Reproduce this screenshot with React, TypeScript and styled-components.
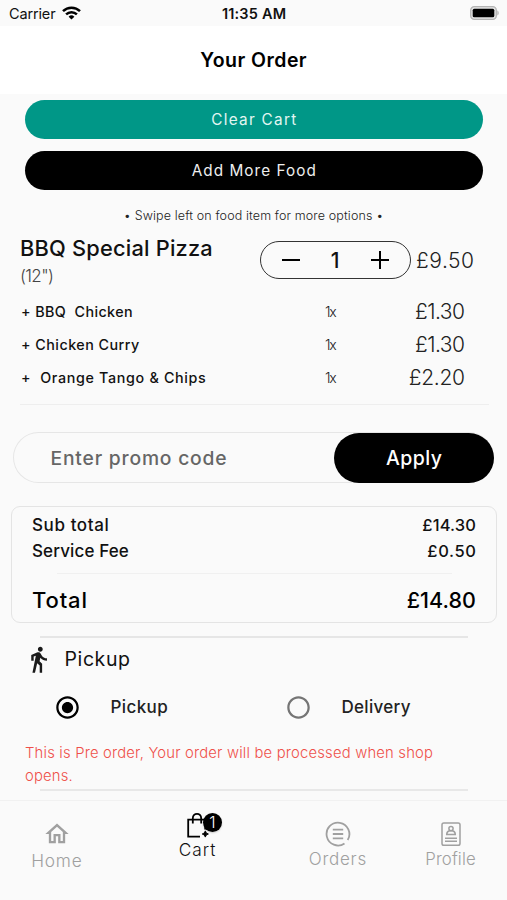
import React from 'react';
import styled, { createGlobalStyle } from 'styled-components';
import { MdDirectionsWalk, MdOutlineHome, MdRadioButtonChecked, MdRadioButtonUnchecked } from 'react-icons/md';

const GlobalStyle = createGlobalStyle`
  * { box-sizing: border-box; }
  body { margin: 0; background: #fafafa; font-family: Inter, 'Open Sans', sans-serif; color: #111; }
  button { font-family: inherit; border: 0; padding: 0; cursor: pointer; }
`;

const Screen = styled.div`
  width: 507px;
  height: 900px;
  display: flex;
  flex-direction: column;
  background: #fafafa;
  overflow: hidden;
`;

const Label = styled.span<{ $size: number; $weight?: number; $track?: number; $color?: string }>`
  font-size: ${(p) => p.$size}px;
  font-weight: ${(p) => p.$weight ?? 500};
  letter-spacing: ${(p) => p.$track ?? 0}px;
  color: ${(p) => p.$color ?? '#111'};
  margin-right: ${(p) => -(p.$track ?? 0)}px;
  white-space: pre;
`;

const StatusBar = styled.div`
  height: 26px;
  display: grid;
  grid-template-columns: 1fr auto 1fr;
  align-items: center;
  padding: 2px 8px 0 9px;
  line-height: 24px;
`;

const Carrier = styled.div`
  display: flex;
  align-items: center;
  gap: 6px;
`;

const WifiSlot = styled.div`
  display: flex;
  padding-bottom: 2px;
`;

const BatterySlot = styled.div`
  display: flex;
  justify-content: flex-end;
  padding-bottom: 2px;
`;

const Header = styled.header`
  height: 68px;
  display: flex;
  align-items: center;
  justify-content: center;
  background: #fff;
`;

const Actions = styled.div`
  display: flex;
  flex-direction: column;
  gap: 12px;
  padding: 6px 24.5px 0 25px;
`;

const PillButton = styled.button<{ $bg: string }>`
  height: 39px;
  border-radius: 20px;
  background: ${(p) => p.$bg};
  display: flex;
  align-items: center;
  justify-content: center;
`;

const Hint = styled.p`
  margin: 14px 0 0;
  line-height: 21px;
  text-align: center;
`;

const Item = styled.section`
  display: flex;
  height: 69px;
  padding: 8px 33px 0 20px;
`;

const ItemName = styled.div`
  flex: 1;
  display: flex;
  flex-direction: column;
  line-height: 28px;
`;

const Stepper = styled.div`
  width: 151px;
  height: 38px;
  margin-top: 7px;
  border: 1px solid #333;
  border-radius: 19px;
  display: flex;
  align-items: center;
  justify-content: space-between;
  padding: 0 20px;
`;

const StepButton = styled.button`
  width: 20px;
  height: 20px;
  background: transparent;
  display: flex;
`;

const ItemPrice = styled.div`
  width: 63.5px;
  line-height: 38px;
  margin-top: 7.5px;
  text-align: right;
`;

const AddonRow = styled.div`
  display: grid;
  grid-template-columns: 304px 1fr auto;
  height: 33px;
  align-items: center;
  padding: 0 42px 0 21px;
`;

const Rule = styled.hr<{ $top: number; $left: number; $right: number; $h?: number; $tone?: string }>`
  border: 0;
  flex: none;
  height: ${(p) => p.$h ?? 1}px;
  margin: ${(p) => `${p.$top}px ${p.$right}px 0 ${p.$left}px`};
  background: ${(p) => p.$tone ?? '#eeeeee'};
`;

const Promo = styled.div`
  display: flex;
  height: 51px;
  margin: 27px 13px 0;
  border-radius: 26px;
  box-shadow: inset 0 0 0 1px #e6e6e6;
`;

const PromoField = styled.div`
  flex: 1;
  display: flex;
  align-items: center;
  padding: 1px 0 0 37.5px;
`;

const ApplyButton = styled.button`
  width: 160px;
  height: 50px;
  margin-top: 1px;
  border-radius: 25px;
  background: #000;
`;

const Totals = styled.section`
  height: 117px;
  margin: 23px 10px 0 11px;
  padding: 5px 20px 0;
  border: 1px solid #e4e4e4;
  border-radius: 9px;
`;

const TotalRow = styled.div<{ $h: number; $top?: number }>`
  display: flex;
  justify-content: space-between;
  height: ${(p) => p.$h}px;
  line-height: ${(p) => p.$h}px;
  margin-top: ${(p) => p.$top ?? 0}px;
`;

const ModeHeading = styled.div`
  height: 42px;
  display: flex;
  align-items: center;
  gap: 12px;
  padding-left: 23.5px;
`;

const Modes = styled.div`
  height: 54px;
  display: grid;
  grid-template-columns: 231px 1fr;
  padding-left: 53.5px;
`;

const Mode = styled.label`
  display: flex;
  align-items: center;
  gap: 30px;
`;

const Notice = styled.p`
  margin: 7px 25px 0;
  height: 44px;
  line-height: 22px;
`;

const Nav = styled.nav`
  margin-top: 9px;
  flex: 1;
  border-top: 1px solid #f1f1f1;
  display: grid;
  grid-template-columns: 113px 168px 113px 113px;
`;

const Tab = styled.a<{ $top: number; $gap?: number }>`
  display: flex;
  flex-direction: column;
  align-items: center;
  gap: ${(p) => p.$gap ?? 0}px;
  padding-top: ${(p) => p.$top}px;
  line-height: 24px;
`;

const CartIcon = styled.div`
  position: relative;
  width: 24px;
  height: 26px;
`;

const Badge = styled.span`
  position: absolute;
  left: 18px;
  top: 0.5px;
  width: 19px;
  height: 19px;
  border-radius: 50%;
  background: #000;
  color: #fff;
  font-size: 16px;
  font-weight: 300;
  line-height: 19px;
  text-align: center;
  box-shadow: 0 1px 2px rgba(0, 0, 0, 0.2);
`;

const GREY = '#a0a0a0';

const Wifi = () => (
  <svg width="19" height="14" viewBox="0 0 19 14" fill="none" stroke="#000" strokeWidth="2.5">
    <path d="M1 5.2a12.2 12.2 0 0 1 17 0" />
    <path d="M4.1 8.4a7.7 7.7 0 0 1 10.8 0" />
    <path d="M9.5 13.6 6.6 10.7a4.1 4.1 0 0 1 5.8 0z" fill="#000" stroke="none" />
  </svg>
);

const Battery = () => (
  <svg width="29" height="14" viewBox="0 0 29 14">
    <rect x="0.7" y="0.7" width="25.6" height="12.6" rx="3.6" fill="#e4e4e4" stroke="#b4b4b4" strokeWidth="1.3" />
    <rect x="2.7" y="2.7" width="21.6" height="8.6" rx="1.6" fill="#000" />
    <path d="M27.3 4.6c1.9.6 1.9 4.2 0 4.8z" fill="#b4b4b4" />
  </svg>
);

const Minus = () => (
  <svg width="20" height="20" viewBox="0 0 20 20">
    <path d="M1 10h18" stroke="#000" strokeWidth="2" />
  </svg>
);

const Plus = () => (
  <svg width="20" height="20" viewBox="0 0 20 20">
    <path d="M1 10h18M10 1v18" stroke="#000" strokeWidth="2" />
  </svg>
);

const Bag = () => (
  <svg width="24" height="26" viewBox="0 0 24 26" fill="none" stroke="#000" strokeWidth="1.8">
    <path d="M15 24.6H3.2V7.6h17v9.8" />
    <path d="M7.8 11.5V6.4c0-6 8.4-6 8.4 0v5.1" />
    <path d="M20.3 18.9q.5 2.6 3.1 3.1-2.6.5-3.1 3.1-.5-2.6-3.1-3.1 2.6-.5 3.1-3.1z" fill="#000" strokeWidth="0.9" />
  </svg>
);

const OrdersIcon = () => (
  <svg width="26" height="26" viewBox="0 0 26 26" fill="none" stroke={GREY} strokeWidth="1.8">
    <path d="M19.5 22.4A11.4 11.4 0 1 1 22.7 19" />
    <path d="M7.8 8.7h10.4M7.8 13h10.4M7.8 17.3h10.4" />
  </svg>
);

const ProfileIcon = () => (
  <svg width="20" height="26" viewBox="0 0 20 26" fill="none" stroke={GREY} strokeWidth="1.5">
    <rect x="1" y="2" width="18" height="22.3" rx="1.8" />
    <circle cx="10" cy="7.6" r="2.1" />
    <path d="M5.7 13.6c0-2.4 1.3-3.400 3-3.800h2.600c1.700.4 3 1.400 3 3.800z" />
    <path d="M4 17.200h12M4 20.200h12" />
  </svg>
);

const addons = [
  { name: '+ BBQ  Chicken', track: 0.4, price: '£1.30', priceTrack: -0.5 },
  { name: '+ Chicken Curry', track: 0.48, price: '£1.30', priceTrack: -0.5 },
  { name: '+  Orange Tango & Chips', track: 0.67, price: '£2.20', priceTrack: -0.3 },
];

export default function App() {
  return (
    <Screen>
      <GlobalStyle />
      <StatusBar>
        <Carrier>
          <Label $size={14.5} $weight={400} $track={-0.15}>Carrier</Label>
          <WifiSlot><Wifi /></WifiSlot>
        </Carrier>
        <Label $size={14.5} $weight={600} $track={0.2}>11:35 AM</Label>
        <BatterySlot><Battery /></BatterySlot>
      </StatusBar>
      <Header>
        <Label $size={19.5} $weight={600} $track={0.45} $color="#000">Your Order</Label>
      </Header>

      <Actions>
        <PillButton $bg="#009787">
          <Label $size={15.3} $weight={400} $track={1.3} $color="#e2f6f2">Clear Cart</Label>
        </PillButton>
        <PillButton $bg="#000">
          <Label $size={15.3} $weight={400} $track={1.06} $color="#eee">Add More Food</Label>
        </PillButton>
      </Actions>

      <Hint>
        <Label $size={12.5} $weight={300} $track={0.13} $color="#222">• Swipe left on food item for more options •</Label>
      </Hint>

      <Item>
        <ItemName>
          <Label $size={21.8} $track={0.2}>BBQ Special Pizza</Label>
          <Label $size={17} $weight={300} $track={-0.63} $color="#444">(12")</Label>
        </ItemName>
        <Stepper>
          <StepButton aria-label="Decrease"><Minus /></StepButton>
          <Label $size={21}>1</Label>
          <StepButton aria-label="Increase"><Plus /></StepButton>
        </Stepper>
        <ItemPrice>
          <Label $size={21} $weight={300} $track={0.5} $color="#222">£9.50</Label>
        </ItemPrice>
      </Item>

      {addons.map((a) => (
        <AddonRow key={a.name}>
          <Label $size={14.3} $track={a.track}>{a.name}</Label>
          <Label $size={14} $weight={300} $track={-1.3} $color="#222">1x</Label>
          <Label $size={21} $weight={300} $track={a.priceTrack} $color="#222">{a.price}</Label>
        </AddonRow>
      ))}
      <Rule $top={10} $left={20} $right={18} />

      <Promo>
        <PromoField>
          <Label $size={19.3} $track={0.8} $color="#666">Enter promo code</Label>
        </PromoField>
        <ApplyButton>
          <Label $size={19.5} $track={0.5} $color="#fff">Apply</Label>
        </ApplyButton>
      </Promo>

      <Totals>
        <TotalRow $h={26}>
          <Label $size={17} $track={0.6}>Sub total</Label>
          <Label $size={16.5} $track={0.14}>£14.30</Label>
        </TotalRow>
        <TotalRow $h={26}>
          <Label $size={17} $track={0.12}>Service Fee</Label>
          <Label $size={16.5} $track={0.64}>£0.50</Label>
        </TotalRow>
        <Rule $top={9} $left={25} $right={24} $tone="#f0f0f0" />
        <TotalRow $h={28} $top={12}>
          <Label $size={22} $track={0.85} $color="#000">Total</Label>
          <Label $size={21.5} $track={0.05} $color="#000">£14.80</Label>
        </TotalRow>
      </Totals>

      <Rule $top={13} $left={40} $right={39} $h={2} $tone="#e6e6e6" />
      <ModeHeading>
        <MdDirectionsWalk size={29} color="#1a1a1a" />
        <Label $size={19.5} $weight={400} $track={0.6}>Pickup</Label>
      </ModeHeading>
      <Modes>
        <Mode>
          <MdRadioButtonChecked size={27} color="#000" />
          <Label $size={17} $weight={450} $track={0.4} $color="#222">Pickup</Label>
        </Mode>
        <Mode>
          <MdRadioButtonUnchecked size={27} color="#757575" />
          <Label $size={17} $weight={450} $track={0.3} $color="#222">Delivery</Label>
        </Mode>
      </Modes>
      <Notice>
        <Label $size={14.8} $weight={300} $track={0.19} $color="#ef4f49">
          {'This is Pre order, Your order will be processed when shop\nopens.'}
        </Label>
      </Notice>
      <Rule $top={4} $left={40} $right={39} $h={2} $tone="#e8e8e8" />

      <Nav>
        <Tab $top={19} $gap={1}>
          <MdOutlineHome size={28} color={GREY} />
          <Label $size={17.3} $weight={300} $track={0.8} $color={GREY}>Home</Label>
        </Tab>
        <Tab $top={11}>
          <CartIcon>
            <Bag />
            <Badge>1</Badge>
          </CartIcon>
          <Label $size={17.3} $weight={300} $track={1} $color="#111">Cart</Label>
        </Tab>
        <Tab $top={20}>
          <OrdersIcon />
          <Label $size={17} $weight={300} $track={0.75} $color={GREY}>Orders</Label>
        </Tab>
        <Tab $top={20}>
          <ProfileIcon />
          <Label $size={16.8} $weight={300} $track={0.15} $color={GREY}>Profile</Label>
        </Tab>
      </Nav>
    </Screen>
  );
}
